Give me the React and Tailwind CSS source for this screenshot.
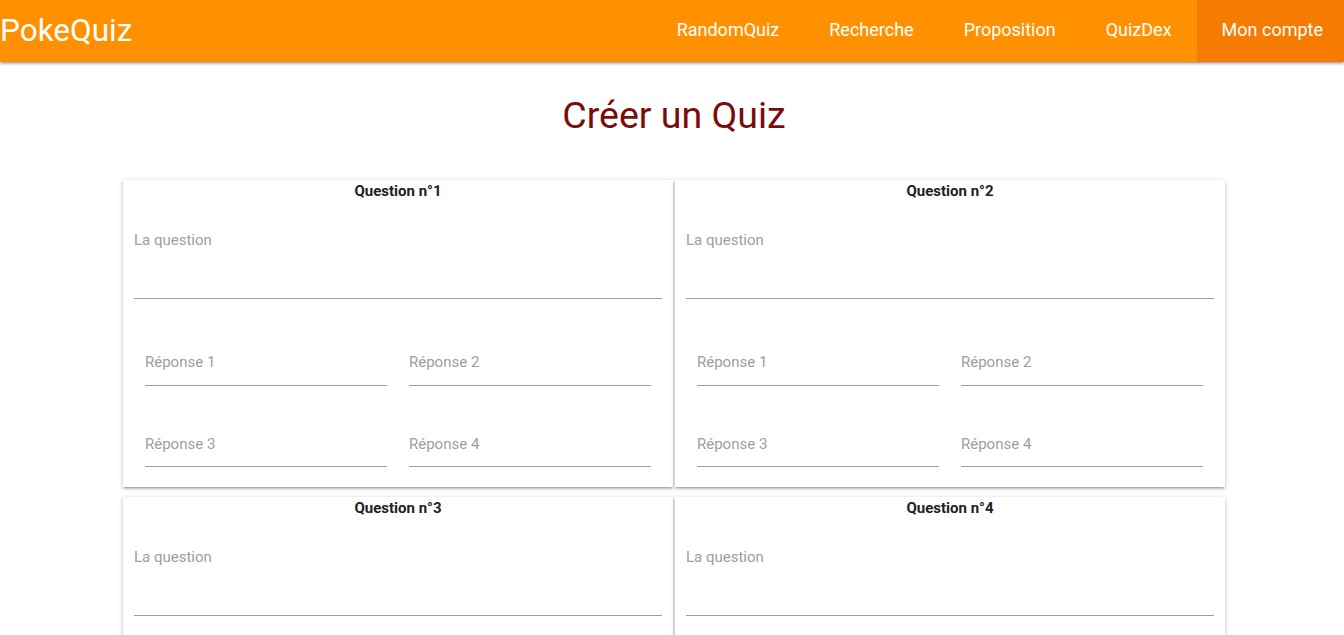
const links = ["RandomQuiz", "Recherche", "Proposition", "QuizDex"];

function Field({ label, top, gap }) {
  return (
    <div className="flex-1">
      <div className={`${top} h-[20px] text-[15px] leading-[20px] text-[#9e9e9e]`}>{label}</div>
      <div className={`${gap} border-b border-[#9e9e9e]`} />
    </div>
  );
}

function QuestionCard({ n }) {
  return (
    <div className="h-[307px] bg-white px-[11px] shadow-[0_2px_2px_0_rgba(0,0,0,0.14),0_3px_1px_-2px_rgba(0,0,0,0.12),0_1px_5px_0_rgba(0,0,0,0.2)]">
      <div className="h-[22px] text-center text-[15px] font-bold leading-[22px] text-[#212121]">
        Question n°{n}
      </div>
      <div className="mt-[28px] h-[20px] text-[15px] leading-[20px] text-[#9e9e9e]">La question</div>
      <div className="h-[49px] border-b border-[#9e9e9e]" />
      <div className="flex gap-x-[22px] px-[11px]">
        <Field label="Réponse 1" top="mt-[53px]" gap="h-[14px]" />
        <Field label="Réponse 2" top="mt-[53px]" gap="h-[14px]" />
      </div>
      <div className="flex gap-x-[22px] px-[11px]">
        <Field label="Réponse 3" top="mt-[48px]" gap="h-[13px]" />
        <Field label="Réponse 4" top="mt-[48px]" gap="h-[13px]" />
      </div>
    </div>
  );
}

export default function App() {
  return (
    <div className="min-h-screen bg-white font-['Roboto',sans-serif]">
      <nav className="relative z-10 flex h-[62px] items-center justify-between bg-[#ff9100] text-white shadow-[0_2px_2px_0_rgba(0,0,0,0.14),0_3px_1px_-2px_rgba(0,0,0,0.12),0_1px_5px_0_rgba(0,0,0,0.2)]">
        <div className="text-[31.5px] leading-[60px]">PokeQuiz</div>
        <ul className="flex h-full">
          {links.map((l) => (
            <li key={l} className="flex h-full items-center px-[25px] pb-[3px] text-[18px]">
              {l}
            </li>
          ))}
          <li className="flex h-full items-center bg-[#f57c00] pb-[3px] pl-[25px] pr-[21px] text-[18px]">Mon compte</li>
        </ul>
      </nav>

      <div className="ml-[123px] w-[1102px] pt-[31px]">
        <h1 className="text-center text-[37.5px] leading-[44px] text-[#7b0c0c]">Créer un Quiz</h1>
        <div className="mt-[43px] grid grid-cols-2 gap-x-[2px] gap-y-[10px]">
          {[1, 2, 3, 4].map((n) => (
            <QuestionCard key={n} n={n} />
          ))}
        </div>
      </div>
    </div>
  );
}
